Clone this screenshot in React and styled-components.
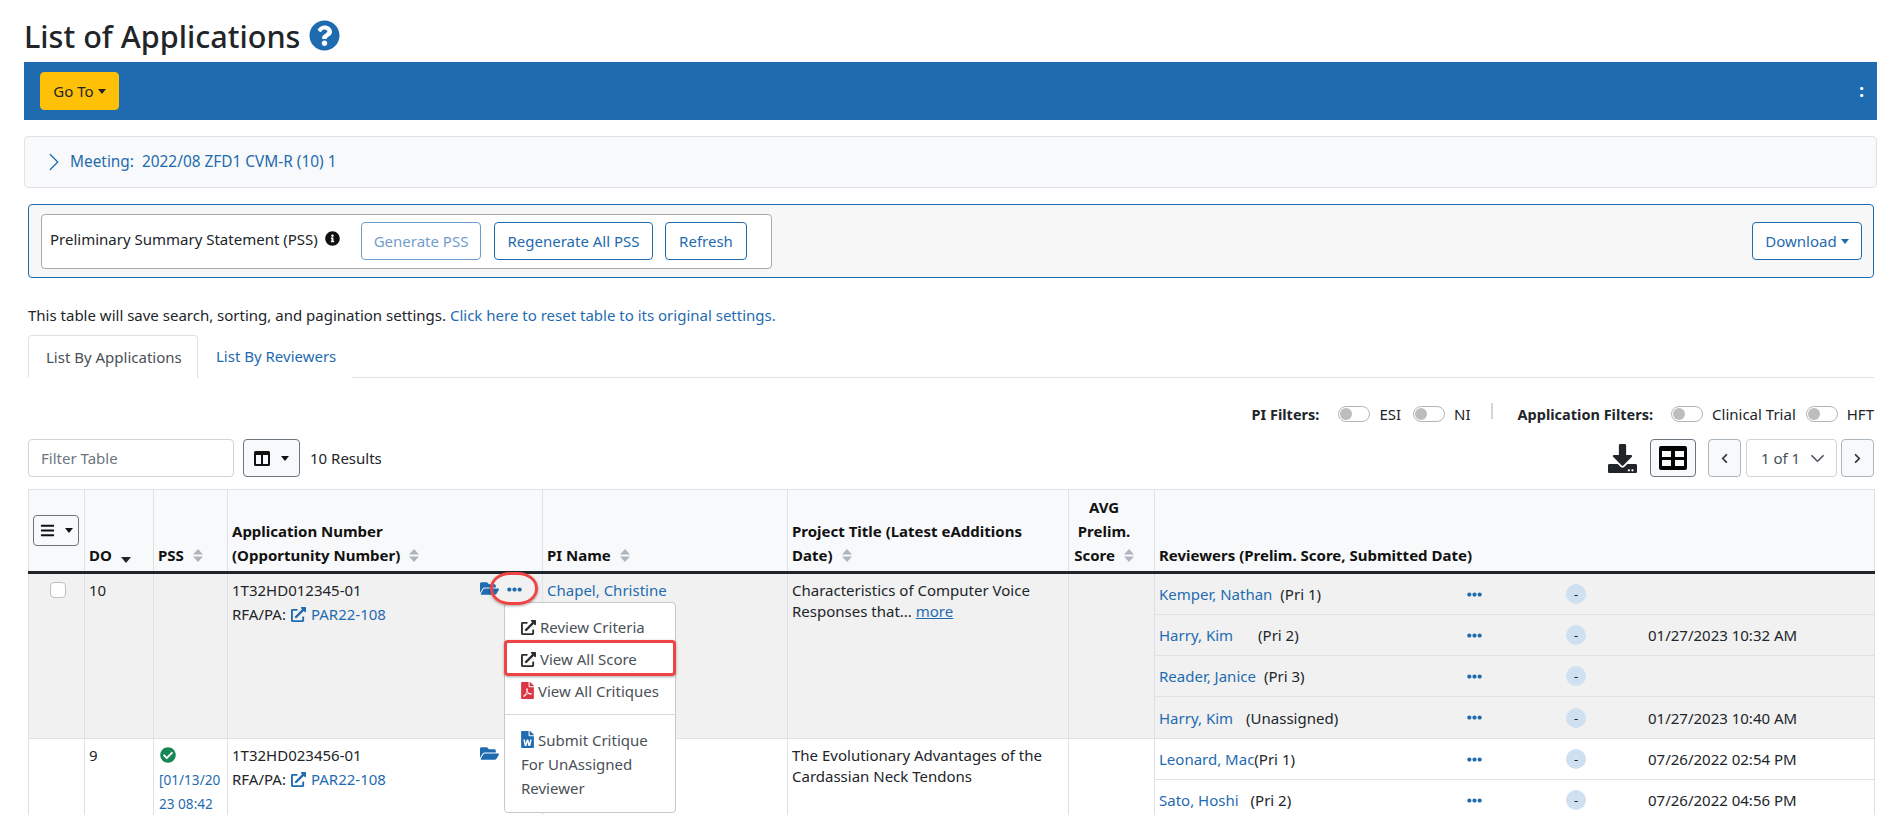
import React from "react";
import styled, { createGlobalStyle } from "styled-components";
import {
  FaQuestionCircle, FaInfoCircle, FaDownload, FaBars, FaExternalLinkAlt,
  FaFolderOpen, FaEllipsisH, FaFilePdf, FaFileWord, FaCheckCircle, FaChevronLeft, FaChevronRight,
} from "react-icons/fa";
import { BsChevronRight, BsChevronDown } from "react-icons/bs";

const BLUE = "#1f6bb0";
const FONT = `"Noto Sans", "Open Sans", sans-serif`;

const Global = createGlobalStyle`
  html, body { margin: 0; height: 815px; overflow: hidden; background: #fff; }
  body { font-family: ${FONT}; font-size: 15px; line-height: 24px; color: #212529; }
  * { box-sizing: border-box; }
`;

const Page = styled.div`
  padding: 0 23px 0 24px;
  width: 1900px;
`;
const TitleRow = styled.div`
  height: 62px;
  display: flex;
  align-items: center;
  gap: 9px;
  padding-top: 9px;
`;
const Title = styled.h1`
  margin: 0;
  font-size: 30.6px;
  font-weight: 500;
  line-height: 36px;
`;
const HelpIcon = styled(FaQuestionCircle)`
  color: ${BLUE};
  font-size: 31px;
`;
const Bar = styled.div`
  height: 58px;
  background: ${BLUE};
  display: flex;
  align-items: center;
  justify-content: space-between;
  padding: 0 16px;
`;
const Caret = styled.span`
  display: inline-block;
  margin-left: 4px;
  vertical-align: 3px;
  border-top: 5px solid currentColor;
  border-left: 4.5px solid transparent;
  border-right: 4.5px solid transparent;
`;
const GoTo = styled.button`
  width: 79px;
  height: 38px;
  padding: 0;
  background: #ffc107;
  border: 1px solid #ffc107;
  border-radius: 4px;
  font: inherit;
  color: #212529;
`;
const Kebab = styled.span`
  color: #fff;
  font-weight: 700;
  font-size: 17px;
  margin-right: -3px;
`;
const Accordion = styled.div`
  height: 52px;
  margin-top: 16px;
  background: #f8f9fa;
  border: 1px solid #dee2e6;
  border-radius: 4px;
  display: flex;
  align-items: center;
  padding-left: 19px;
  gap: 6px;
  font-size: 15.4px;
  color: ${BLUE};
  svg { font-size: 20px; }
`;
const MeetingLabel = styled.span`
  margin-right: 8px;
`;
const Section = styled.div`
  margin: 0 3px 0 4px;
`;
const Panel = styled.div`
  height: 74px;
  margin-top: 16px;
  border: 1px solid ${BLUE};
  border-radius: 4px;
  background: #f7f7f7;
  display: flex;
  align-items: center;
  justify-content: space-between;
  padding: 0 11px 0 12px;
`;
const PssBox = styled.div`
  width: 731px;
  height: 55px;
  background: #fff;
  border: 1px solid #a9a9a9;
  border-radius: 4px;
  display: flex;
  align-items: center;
  padding-left: 8px;
`;
const PssLabel = styled.span`
  width: 275px;
  margin-top: -4px;
`;
const PssInfo = styled(FaInfoCircle)`
  font-size: 15px;
  color: #111;
  margin: -6px 21px 0 0;
`;
const OutlineBtn = styled.button`
  height: 38px;
  width: ${(p) => p.$w}px;
  margin-right: ${(p) => p.$mr || 0}px;
  padding: 0;
  background: #fff;
  border: 1px solid ${BLUE};
  border-radius: 4px;
  font: inherit;
  color: ${BLUE};
  opacity: ${(p) => (p.disabled ? 0.65 : 1)};
`;
const Note = styled.div`
  margin-top: 25px;
  height: 24px;
`;
const Link = styled.a`
  color: ${BLUE};
  text-decoration: none;
`;
const Tabs = styled.div`
  margin-top: 8px;
  height: 43px;
  display: flex;
  border-bottom: 1px solid #dee2e6;
`;
const Tab = styled.div`
  height: 43px;
  padding: 9px 16px 0 17px;
  white-space: nowrap;
  color: ${(p) => (p.$active ? "#495057" : BLUE)};
  background: #fff;
  ${(p) =>
    p.$active
      ? `width: 170px; border: 1px solid #dee2e6; border-bottom-color: #fff; border-radius: 4px 4px 0 0;`
      : `margin-left: 1px;`}
`;
const FilterRow = styled.div`
  height: 52px;
  display: flex;
  align-items: center;
  justify-content: flex-end;
  padding-top: 19px;
`;
const FilterTitle = styled.b`
  font-weight: 700;
  font-size: 14.5px;
  margin-right: ${(p) => p.$mr}px;
`;
const Toggle = styled.span`
  width: 32px;
  height: 16px;
  border: 1px solid #b5b5b5;
  border-radius: 8px;
  background: #fff;
  padding: 1px;
  margin: 0 9px 0 ${(p) => p.$ml || 0}px;
  display: flex;
  &::before {
    content: "";
    width: 12px;
    height: 12px;
    border-radius: 50%;
    background: #bdbdbd;
  }
`;
const Divider = styled.span`
  width: 2px;
  height: 16px;
  background: #d5d5d5;
  margin: -6px 25px 0 20px;
`;
const Controls = styled.div`
  height: 38px;
  margin-top: 9px;
  display: flex;
  align-items: center;
`;
const FilterInput = styled.div`
  width: 206px;
  height: 38px;
  border: 1px solid #ced4da;
  border-radius: 4px;
  padding: 6px 12px;
  color: #6c757d;
`;
const ColumnBtn = styled.button`
  width: 57px;
  height: 38px;
  margin: 0 10px 0 9px;
  background: #f8f9fa;
  border: 1px solid #6c757d;
  border-radius: 4px;
  padding: 0;
  color: #111;
  display: flex;
  align-items: center;
  justify-content: center;
  gap: 7px;
`;
const Spacer = styled.div`
  flex: 1;
`;
const DownloadIcon = styled(FaDownload)`
  font-size: 29px;
  color: #212529;
  margin-right: 13px;
`;
const GridBtn = styled.button`
  width: 46px;
  height: 38px;
  margin-right: 12px;
  background: #f8f9fa;
  border: 1px solid #6c757d;
  border-radius: 4px;
  padding: 0;
  display: flex;
  align-items: center;
  justify-content: center;
`;
const PageBtn = styled.button`
  width: 33px;
  height: 38px;
  background: #f8f9fa;
  border: 1px solid #adb5bd;
  border-radius: 4px;
  padding: 0;
  color: #343a40;
  display: flex;
  align-items: center;
  justify-content: center;
  font-size: 11px;
`;
const PageSelect = styled.div`
  width: 91px;
  height: 38px;
  margin: 0 4px 0 5px;
  border: 1px solid #ced4da;
  border-radius: 4px;
  display: flex;
  align-items: center;
  justify-content: space-between;
  padding: 0 11px 0 14px;
  color: #495057;
  svg { font-size: 15px; stroke: currentColor; stroke-width: 0.8; }
`;
const Table = styled.table`
  margin-top: 12px;
  width: 1846px;
  table-layout: fixed;
  border-collapse: collapse;
`;
const Th = styled.th`
  height: 83px;
  padding: 0 ${(p) => (p.$center ? "19px" : "5px")} 4px 4px;
  vertical-align: bottom;
  text-align: ${(p) => (p.$center ? "center" : "left")};
  background: #f8f9fa;
  border: 1px solid #dee2e6;
  border-bottom: 3px solid #212529;
  font-weight: 700;
  color: #111;
`;
const HeaderMenuBtn = styled.button`
  width: 46px;
  height: 31px;
  margin-bottom: 21px;
  background: #f8f9fa;
  border: 1px solid #6c757d;
  border-radius: 4px;
  padding: 0;
  display: flex;
  align-items: center;
  justify-content: center;
  gap: 6px;
  color: #111;
  svg { font-size: 15px; }
`;
const SortWrap = styled.svg`
  width: 10px;
  height: 13px;
  margin-left: 9px;
  vertical-align: -1px;
`;
const Sort = () => (
  <SortWrap viewBox="0 0 10 13">
    <path d="M5 0 L10 5.4 H0 Z M0 7.6 H10 L5 13 Z" fill="#adb5bd" />
  </SortWrap>
);
const SortDown = styled.span`
  display: inline-block;
  margin-left: 9px;
  vertical-align: -2px;
  border-top: 6px solid #212529;
  border-left: 5px solid transparent;
  border-right: 5px solid transparent;
`;
const Tr = styled.tr`
  background: ${(p) => (p.$shaded ? "#f1f1f1" : "#fff")};
`;
const Td = styled.td`
  padding: ${(p) => (p.$flush ? "0" : "3.5px 5px 4px 4px")};
  vertical-align: top;
  border: 1px solid #dee2e6;
  position: ${(p) => (p.$anchor ? "relative" : "static")};
`;
const Check = styled.div`
  width: 16px;
  height: 16px;
  margin: 4px 0 0 17px;
  background: #fff;
  border: 1px solid #bfbfbf;
  border-radius: 4px;
`;
const AppCell = styled.div`
  display: flex;
  justify-content: space-between;
`;
const ExtIcon = styled(FaExternalLinkAlt)`
  color: ${(p) => p.$c || BLUE};
  font-size: 15px;
  margin: 0 5px 0 5px;
  vertical-align: -2px;
`;
const Actions = styled.div`
  display: flex;
  align-items: center;
  height: 24px;
  margin-right: 15px;
  gap: 8px;
  color: ${BLUE};
`;
const FolderIcon = styled(FaFolderOpen)`
  font-size: 19px;
  margin-top: -3px;
`;
const DotsIcon = styled(FaEllipsisH)`
  font-size: 15px;
  color: ${BLUE};
`;
const RedOval = styled.div`
  position: absolute;
  left: 262px;
  top: -2px;
  width: 48px;
  height: 33px;
  border: 3px solid #ef4444;
  border-radius: 20px / 16px;
  box-shadow: 0 1px 3px rgba(0, 0, 0, 0.35);
  z-index: 6;
`;
const Menu = styled.div`
  position: absolute;
  left: 276px;
  top: 28px;
  width: 172px;
  padding: 8px 0;
  background: #fff;
  border: 1px solid #c8c8c8;
  border-radius: 4px;
  z-index: 5;
  color: #495057;
`;
const MenuItem = styled.div`
  position: relative;
  padding: 4px 0 4px 16px;
  white-space: nowrap;
  &::after {
    content: "";
    display: ${(p) => (p.$mark ? "block" : "none")};
    position: absolute;
    inset: -3px -1px -1px -1px;
    border: 3px solid #ef4444;
    border-radius: 4px;
    box-shadow: 0 1px 3px rgba(0, 0, 0, 0.35);
  }
`;
const MenuExt = styled(FaExternalLinkAlt)`
  color: #2b2f33;
  font-size: 15px;
  margin-right: 4px;
  vertical-align: -2px;
`;
const PdfIcon = styled(FaFilePdf)`
  color: #dc3545;
  font-size: 17px;
  margin: 0 2px 0 -2px;
  vertical-align: -2px;
`;
const WordIcon = styled(FaFileWord)`
  color: ${BLUE};
  font-size: 17px;
  margin: 0 2px 0 -2px;
  vertical-align: -2px;
`;
const MenuRule = styled.hr`
  margin: 7px 0 9px;
  border: 0;
  border-top: 1px solid #d8d8d8;
`;
const Underlined = styled.a`
  color: ${BLUE};
  text-decoration: underline;
`;
const CheckIcon = styled(FaCheckCircle)`
  display: block;
  color: #198754;
  font-size: 16px;
  margin: 4px 0 5px 2px;
`;
const PssDate = styled.div`
  color: ${BLUE};
  word-break: break-all;
  font-size: 13.6px;
  margin-left: 1px;
`;
const TitleText = styled.div`
  line-height: 21.5px;
  padding-top: 2px;
`;
const RevRow = styled.div`
  height: 41px;
  display: grid;
  grid-template-columns: 312px 99px 82px 1fr;
  align-items: center;
  border-bottom: ${(p) => (p.$last ? "0" : "1px solid #dee2e6")};
`;
const RevName = styled.div`
  padding-left: 4px;
  white-space: nowrap;
`;
const Pri = styled.span`
  margin-left: ${(p) => p.$gap}px;
`;
const RevDots = styled(FaEllipsisH)`
  font-size: 15px;
  color: ${BLUE};
`;
const Score = styled.span`
  width: 20px;
  height: 20px;
  border-radius: 50%;
  background: #cfe0f0;
  display: flex;
  align-items: center;
  justify-content: center;
  font-size: 13px;
`;

const Reviewer = ({ name, pri, gap, date, last }) => (
  <RevRow $last={last}>
    <RevName>
      <Link>{name}</Link>
      <Pri $gap={gap}>{pri}</Pri>
    </RevName>
    <RevDots />
    <Score>-</Score>
    <span>{date}</span>
  </RevRow>
);

export default function App() {
  return (
    <Page>
      <Global />
      <TitleRow>
        <Title>List of Applications</Title>
        <HelpIcon />
      </TitleRow>
      <Bar>
        <GoTo>
          Go To<Caret />
        </GoTo>
        <Kebab>:</Kebab>
      </Bar>
      <Accordion>
        <BsChevronRight />
        <span>
          <MeetingLabel>Meeting:</MeetingLabel>2022/08 ZFD1 CVM-R (10) 1
        </span>
      </Accordion>
      <Section>
        <Panel>
          <PssBox>
            <PssLabel>Preliminary Summary Statement (PSS)</PssLabel>
            <PssInfo />
            <OutlineBtn $w={120} $mr={13} disabled>Generate PSS</OutlineBtn>
            <OutlineBtn $w={159} $mr={12}>Regenerate All PSS</OutlineBtn>
            <OutlineBtn $w={82}>Refresh</OutlineBtn>
          </PssBox>
          <OutlineBtn $w={110}>
            Download<Caret />
          </OutlineBtn>
        </Panel>
        <Note>
          This table will save search, sorting, and pagination settings.{" "}
          <Link>Click here to reset table to its original settings.</Link>
        </Note>
        <Tabs>
          <Tab $active>List By Applications</Tab>
          <Tab>List By Reviewers</Tab>
        </Tabs>
        <FilterRow>
          <FilterTitle $mr={19}>PI Filters:</FilterTitle>
          <Toggle />ESI
          <Toggle $ml={12} />NI
          <Divider />
          <FilterTitle $mr={18}>Application Filters:</FilterTitle>
          <Toggle />Clinical Trial
          <Toggle $ml={10} />HFT
        </FilterRow>
        <Controls>
          <FilterInput>Filter Table</FilterInput>
          <ColumnBtn>
            <svg width="16" height="15" viewBox="0 0 16 15">
              <path fillRule="evenodd" d="M0 1.5A1.5 1.5 0 0 1 1.5 0h13A1.5 1.5 0 0 1 16 1.5v12a1.5 1.5 0 0 1-1.5 1.5h-13A1.5 1.5 0 0 1 0 13.5zM2 4v9h5V4zm7 0v9h5V4z" fill="#111" />
            </svg>
            <Caret />
          </ColumnBtn>
          <span>10 Results</span>
          <Spacer />
          <DownloadIcon />
          <GridBtn>
            <svg width="28" height="24" viewBox="0 0 28 24">
              <path fillRule="evenodd" d="M2 0h24a2 2 0 0 1 2 2v20a2 2 0 0 1-2 2H2a2 2 0 0 1-2-2V2a2 2 0 0 1 2-2zM3 5v6h9V5zm13 0v6h9V5zM3 14v6h9v-6zm13 0v6h9v-6z" fill="#000" />
            </svg>
          </GridBtn>
          <PageBtn><FaChevronLeft /></PageBtn>
          <PageSelect>1 of 1 <BsChevronDown /></PageSelect>
          <PageBtn><FaChevronRight /></PageBtn>
        </Controls>
        <Table>
          <colgroup>
            <col width="56" /><col width="69" /><col width="74" /><col width="315" />
            <col width="245" /><col width="281" /><col width="86" /><col width="720" />
          </colgroup>
          <thead>
            <tr>
              <Th>
                <HeaderMenuBtn><FaBars /><Caret /></HeaderMenuBtn>
              </Th>
              <Th>DO<SortDown /></Th>
              <Th>PSS<Sort /></Th>
              <Th>Application Number<br />(Opportunity Number)<Sort /></Th>
              <Th>PI Name<Sort /></Th>
              <Th>Project Title (Latest eAdditions Date)<Sort /></Th>
              <Th $center>AVG Prelim. Score<Sort /></Th>
              <Th>Reviewers (Prelim. Score, Submitted Date)</Th>
            </tr>
          </thead>
          <tbody>
            <Tr $shaded>
              <Td><Check /></Td>
              <Td>10</Td>
              <Td />
              <Td $anchor>
                <AppCell>
                  <div>
                    1T32HD012345-01
                    <br />
                    RFA/PA:<ExtIcon /><Link>PAR22-108</Link>
                  </div>
                  <Actions><FolderIcon /><DotsIcon /></Actions>
                </AppCell>
                <RedOval />
                <Menu>
                  <MenuItem><MenuExt />Review Criteria</MenuItem>
                  <MenuItem $mark><MenuExt />View All Score</MenuItem>
                  <MenuItem><PdfIcon />View All Critiques</MenuItem>
                  <MenuRule />
                  <MenuItem><WordIcon />Submit Critique<br />For UnAssigned<br />Reviewer</MenuItem>
                </Menu>
              </Td>
              <Td><Link>Chapel, Christine</Link></Td>
              <Td>
                <TitleText>
                  Characteristics of Computer Voice Responses that...{" "}
                  <Underlined>more</Underlined>
                </TitleText>
              </Td>
              <Td />
              <Td $flush>
                <Reviewer name="Kemper, Nathan" pri="(Pri 1)" gap={8} />
                <Reviewer name="Harry, Kim" pri="(Pri 2)" gap={25} date="01/27/2023 10:32 AM" />
                <Reviewer name="Reader, Janice" pri="(Pri 3)" gap={8} />
                <Reviewer name="Harry, Kim" pri="(Unassigned)" gap={13} date="01/27/2023 10:40 AM" last />
              </Td>
            </Tr>
            <Tr>
              <Td />
              <Td>9</Td>
              <Td>
                <CheckIcon />
                <PssDate>[01/13/2023 08:42</PssDate>
              </Td>
              <Td>
                <AppCell>
                  <div>
                    1T32HD023456-01
                    <br />
                    RFA/PA:<ExtIcon /><Link>PAR22-108</Link>
                  </div>
                  <Actions><FolderIcon /><DotsIcon /></Actions>
                </AppCell>
              </Td>
              <Td />
              <Td><TitleText>The Evolutionary Advantages of the Cardassian Neck Tendons</TitleText></Td>
              <Td />
              <Td $flush>
                <Reviewer name="Leonard, Mac" pri="(Pri 1)" gap={0} date="07/26/2022 02:54 PM" />
                <Reviewer name="Sato, Hoshi" pri="(Pri 2)" gap={12} date="07/26/2022 04:56 PM" />
              </Td>
            </Tr>
          </tbody>
        </Table>
      </Section>
    </Page>
  );
}
